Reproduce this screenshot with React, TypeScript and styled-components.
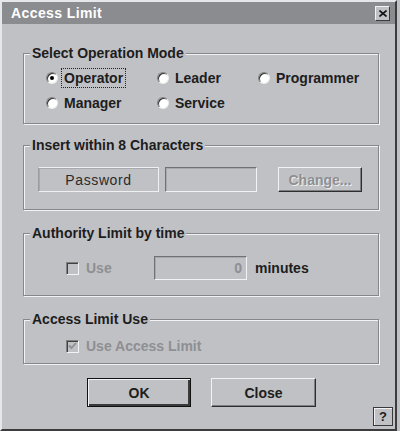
import * as React from 'react';
import styled, { createGlobalStyle } from 'styled-components';

const BG = '#c0c1c5';

const GlobalStyle = createGlobalStyle`
  html, body {
    margin: 0;
    padding: 0;
  }
  body {
    background: ${BG};
    font-family: "Liberation Sans", Arial, sans-serif;
    font-size: 14px;
    font-weight: bold;
    color: #1d1d1d;
  }
`;

const Window = styled.div`
  width: 397px;
  height: 431px;
  box-sizing: border-box;
  border-style: solid;
  border-width: 2px;
  border-color: #e6e7ea #3c3c3c #3c3c3c #e6e7ea;
  background: ${BG};
  display: flex;
  flex-direction: column;
`;

const TitleBar = styled.div`
  height: 22px;
  flex: none;
  display: flex;
  align-items: center;
  justify-content: space-between;
  padding: 0 5px 0 9px;
  background: #8b8c90;
  color: #fff;
  letter-spacing: 0.4px;
`;

const CloseBox = styled.div`
  width: 15px;
  height: 15px;
  box-sizing: border-box;
  display: flex;
  align-items: center;
  justify-content: center;
  background: ${BG};
  border-style: solid;
  border-width: 1px;
  border-color: #f2f2f2 #3c3c3c #3c3c3c #f2f2f2;
`;

const Body = styled.div`
  flex: 1;
  display: flex;
  flex-direction: column;
  padding: 21px 0 0 21px;
`;

const Group = styled.fieldset<{ $h: number; $mb: number }>`
  width: 356px;
  height: ${p => p.$h}px;
  margin: 0 0 ${p => p.$mb}px;
  padding: 0;
  min-width: 0;
  box-sizing: border-box;
  border: 1px solid #86878a;
  box-shadow: 1px 1px 0 #f3f3f5, inset 1px 1px 0 #f3f3f5;
`;

const Legend = styled.legend`
  margin-left: 6px;
  padding: 0 2px;
  height: 16px;
  line-height: 16px;
  background: ${BG};
  color: #1d1d1d;
`;

const RadioGrid = styled.div`
  display: grid;
  grid-template-columns: 111px 101px auto;
  row-gap: 5px;
  padding: 7px 0 0 22px;
`;

const RadioItem = styled.label`
  display: flex;
  align-items: center;
  height: 20px;
`;

const RadioCircle = styled.span<{ $on?: boolean }>`
  width: 12px;
  height: 12px;
  box-sizing: border-box;
  border-radius: 50%;
  background: #fff;
  border: 1px solid;
  border-color: #808080 #ececec #ececec #808080;
  box-shadow: inset 1px 1px 0 #303030;
  display: flex;
  align-items: center;
  justify-content: center;
  flex: none;

  &::after {
    content: '';
    width: 4px;
    height: 4px;
    border-radius: 50%;
    background: ${p => (p.$on ? '#000' : 'transparent')};
  }
`;

const OptionText = styled.span<{ $focus?: boolean }>`
  margin-left: 3px;
  padding: 0 2px;
  height: 20px;
  line-height: 19px;
  box-sizing: border-box;
  border: 1px dotted ${p => (p.$focus ? '#222' : 'transparent')};
`;

const Row = styled.div<{ $pt: number; $pl: number }>`
  display: flex;
  align-items: center;
  padding: ${p => p.$pt}px 0 0 ${p => p.$pl}px;
`;

const StaticBox = styled.div`
  width: 121px;
  height: 25px;
  box-sizing: border-box;
  display: flex;
  align-items: center;
  justify-content: center;
  border: 1px solid;
  border-color: #f0f0f2 #f0f0f2 #f0f0f2 #9a9b9e;
  box-shadow: inset 1px 1px 0 #a8a9ac;
  color: #2a2a2a;
  font-weight: normal;
  letter-spacing: 0.6px;
`;

const Field = styled.div<{ $w: number; $h: number; $ml: number }>`
  width: ${p => p.$w}px;
  height: ${p => p.$h}px;
  margin-left: ${p => p.$ml}px;
  box-sizing: border-box;
  display: flex;
  align-items: center;
  justify-content: flex-end;
  padding-right: 4px;
  border: 1px solid;
  border-color: #707174 #f3f3f5 #f3f3f5 #707174;
  box-shadow: inset 1px 1px 0 #a8a9ac;
  color: #8e8f92;
`;

const Button = styled.div<{ $w: number; $h: number; $ml?: number; $default?: boolean; $disabled?: boolean }>`
  width: ${p => p.$w}px;
  height: ${p => p.$h}px;
  margin-left: ${p => p.$ml || 0}px;
  box-sizing: border-box;
  display: flex;
  align-items: center;
  justify-content: center;
  border: 1px solid;
  border-color: ${p => (p.$default ? '#111' : '#f3f3f5 #2e2e2e #2e2e2e #f3f3f5')};
  box-shadow: ${p =>
    p.$default
      ? 'inset 1px 1px 0 #f3f3f5, inset -2px -2px 0 #3a3a3a'
      : 'inset -1px -1px 0 #7e7f82'};
  color: ${p => (p.$disabled ? '#8e8f92' : '#1d1d1d')};
  text-shadow: ${p => (p.$disabled ? '1px 1px 0 #eeeeee' : 'none')};
`;

const CheckItem = styled.label<{ $w?: number }>`
  display: flex;
  align-items: center;
  width: ${p => (p.$w ? `${p.$w}px` : 'auto')};
  height: 20px;
  color: #8e8f92;
`;

const CheckBox = styled.span`
  width: 13px;
  height: 13px;
  box-sizing: border-box;
  flex: none;
  margin-right: 7px;
  border: 1px solid;
  border-color: #808080 #f3f3f5 #f3f3f5 #808080;
  box-shadow: inset 1px 1px 0 #404040;
  display: flex;
  align-items: center;
  justify-content: center;
`;

const Unit = styled.span`
  margin-left: 8px;
`;

const Footer = styled.div`
  flex: 1;
  display: flex;
  align-items: flex-start;
  padding-left: 64px;
  padding-right: 2px;
`;

const HelpBox = styled.div`
  margin-left: auto;
  align-self: flex-end;
  margin-bottom: 3px;
  width: 20px;
  height: 19px;
  box-sizing: border-box;
  display: flex;
  align-items: center;
  justify-content: center;
  border: 1px solid #3a3a3a;
  box-shadow: inset 1px 1px 0 #f3f3f5;
  font-size: 13px;
`;

const Radio = ({ label, on, focus }: { label: string; on?: boolean; focus?: boolean }) => (
  <RadioItem>
    <RadioCircle $on={on} />
    <OptionText $focus={focus}>{label}</OptionText>
  </RadioItem>
);

const App = () => (
  <>
    <GlobalStyle />
    <Window>
      <TitleBar>
        <span>Access Limit</span>
        <CloseBox>
          <svg width="8" height="7" viewBox="0 0 8 7">
            <path d="M0.5 0.5 L7.5 6.5 M7.5 0.5 L0.5 6.5" stroke="#111" strokeWidth="1.6" />
          </svg>
        </CloseBox>
      </TitleBar>
      <Body>
        <Group $h={79} $mb={13}>
          <Legend>Select Operation Mode</Legend>
          <RadioGrid>
            <Radio label="Operator" on focus />
            <Radio label="Leader" />
            <Radio label="Programmer" />
            <Radio label="Manager" />
            <Radio label="Service" />
          </RadioGrid>
        </Group>

        <Group $h={73} $mb={15}>
          <Legend>Insert within 8 Characters</Legend>
          <Row $pt={14} $pl={14}>
            <StaticBox>Password</StaticBox>
            <Field $w={92} $h={25} $ml={6} />
            <Button $w={84} $h={25} $ml={21} $disabled>Change...</Button>
          </Row>
        </Group>

        <Group $h={71} $mb={15}>
          <Legend>Authority Limit by time</Legend>
          <Row $pt={15} $pl={42}>
            <CheckItem $w={88}>
              <CheckBox />
              Use
            </CheckItem>
            <Field $w={93} $h={24} $ml={0}>0</Field>
            <Unit>minutes</Unit>
          </Row>
        </Group>

        <Group $h={53} $mb={14}>
          <Legend>Access Limit Use</Legend>
          <Row $pt={9} $pl={42}>
            <CheckItem>
              <CheckBox>
                <svg width="9" height="8" viewBox="0 0 9 8">
                  <path d="M1 3.5 L3.5 6 L8 1" fill="none" stroke="#8e8f92" strokeWidth="1.8" />
                </svg>
              </CheckBox>
              Use Access Limit
            </CheckItem>
          </Row>
        </Group>

        <Footer>
          <Button $w={104} $h={29} $default>OK</Button>
          <Button $w={105} $h={29} $ml={20}>Close</Button>
          <HelpBox>?</HelpBox>
        </Footer>
      </Body>
    </Window>
  </>
);

export default App;
